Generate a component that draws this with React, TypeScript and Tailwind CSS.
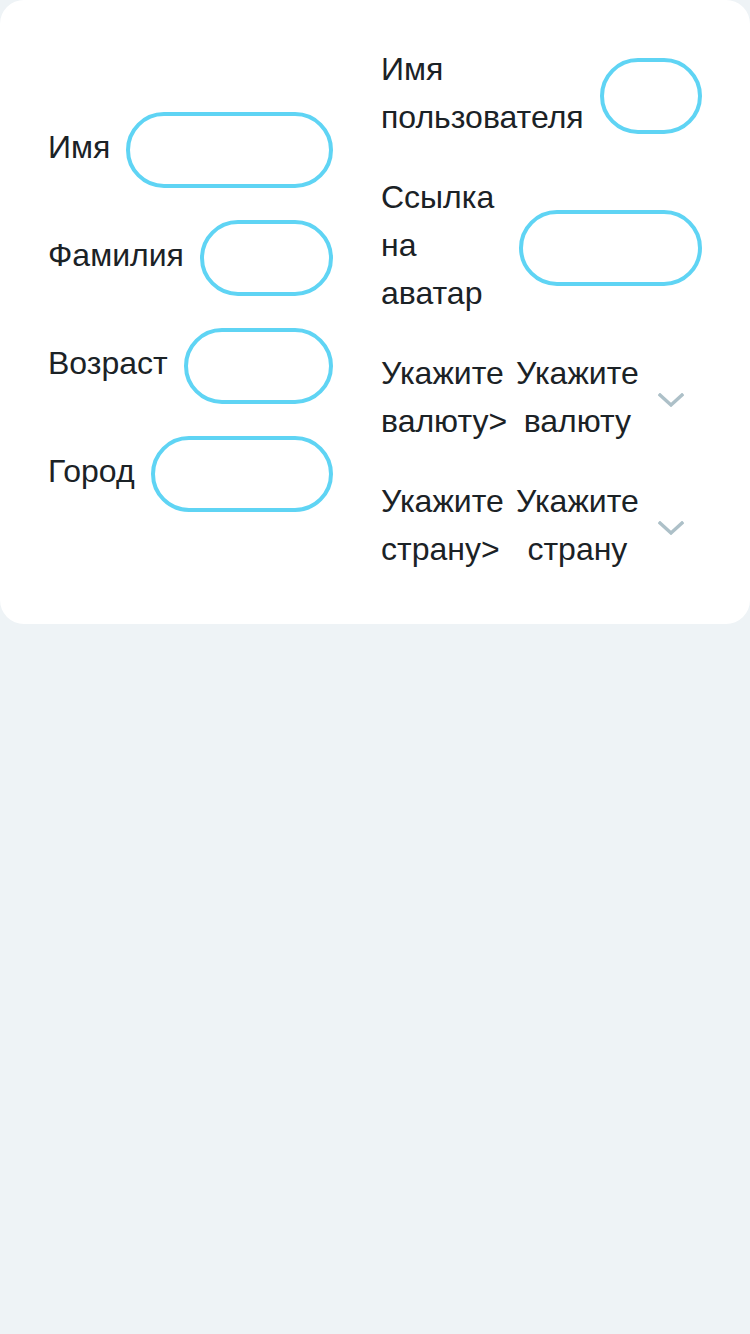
const fields = ['Имя', 'Фамилия', 'Возраст', 'Город'];

const Chevron = () => (
  <svg width="26" height="14" viewBox="0 0 26 14" fill="none" className="shrink-0">
    <path d="M2 2L13 12L24 2" stroke="#adc0c8" strokeWidth="3.4" strokeLinecap="square" />
  </svg>
);

const TextField = ({ label, labelWidth = 'w-min' }: { label: string; labelWidth?: string }) => (
  <div className="flex items-center gap-4">
    <label className={`-mt-[3px] mb-[3px] shrink-0 ${labelWidth} text-[32px] leading-[48px] text-[#1b2226]`}>{label}</label>
    <div className="h-[76px] flex-1 min-w-0 rounded-full border-4 border-[#5fd4f4] bg-white" />
  </div>
);

const SelectField = ({ label, placeholder }: { label: string; placeholder: string }) => (
  <div className="flex items-center gap-[9px]">
    <label className="-mt-[3px] mb-[3px] w-[126px] shrink-0 text-[32px] leading-[48px] text-[#1b2226]">{label}</label>
    <div className="flex flex-1 items-center">
      <span className="-mt-[3px] mb-[3px] w-min text-center text-[32px] leading-[48px] text-[#1b2226]">{placeholder}</span>
      <div className="ml-[19px]">
        <Chevron />
      </div>
    </div>
  </div>
);

export default function App() {
  return (
    <div className="min-h-screen bg-[#eef3f6] font-['Liberation_Sans',Arial,sans-serif]">
      <div className="flex items-center gap-12 rounded-3xl bg-white p-12">
        {/* Left column */}
        <div className="flex w-[285px] shrink-0 flex-col gap-8">
          {fields.map((f) => (
            <TextField key={f} label={f} />
          ))}
        </div>

        {/* Right column */}
        <div className="flex flex-1 flex-col gap-8">
          <TextField label="Имя пользователя" />
          <TextField label="Ссылка на аватар" labelWidth="w-[122px]" />
          <SelectField label="Укажите валюту>" placeholder="Укажите валюту" />
          <SelectField label="Укажите страну>" placeholder="Укажите страну" />
        </div>
      </div>
    </div>
  );
}
